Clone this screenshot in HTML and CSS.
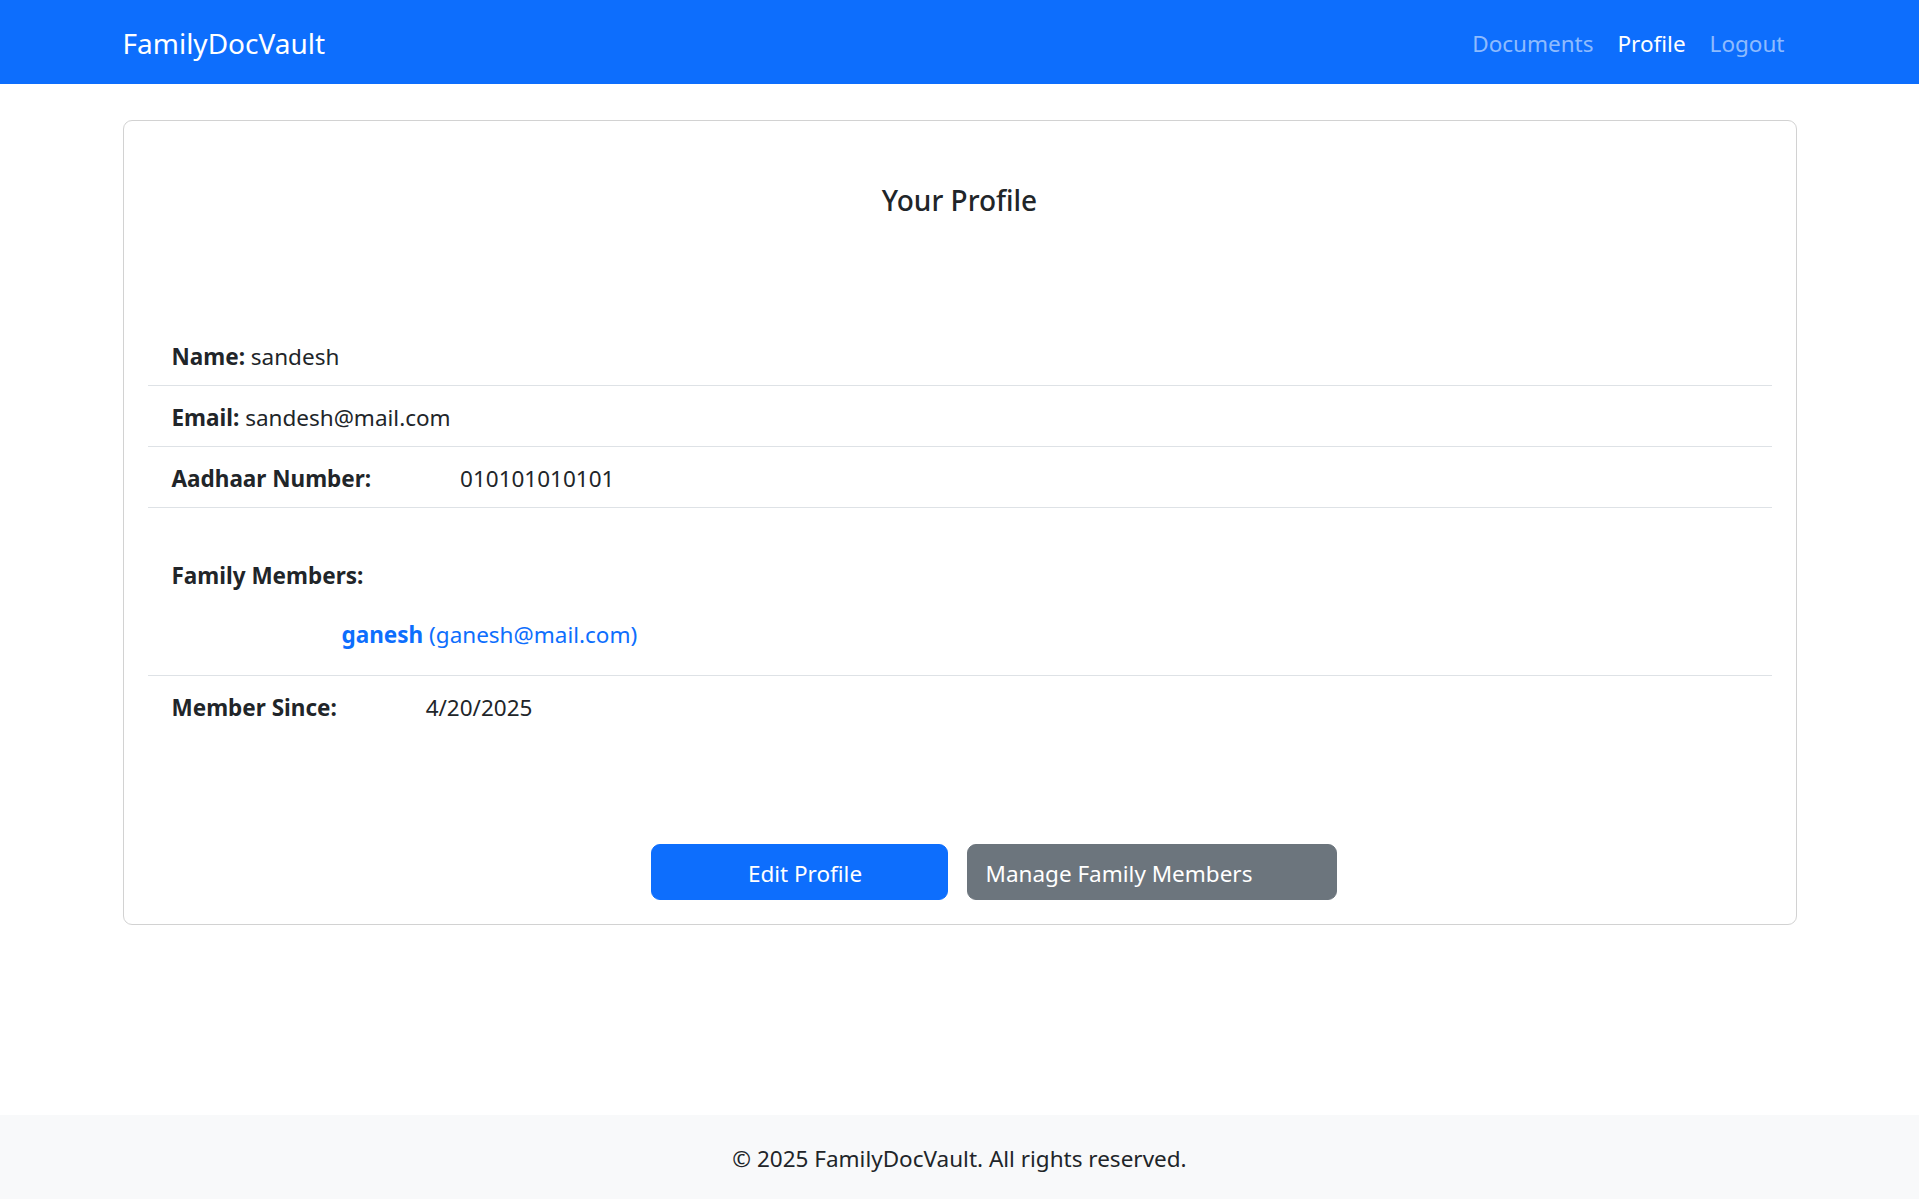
FILE: index.html
```html
<!DOCTYPE html>
<html lang="en">
<head>
<meta charset="utf-8">
<title>Profile - FamilyDocVault</title>
<link rel="stylesheet" href="styles.css">
</head>
<body>
<nav class="navbar">
  <div class="container nav-inner">
    <a class="brand" href="#">FamilyDocVault</a>
    <ul class="nav-links">
      <li><a class="nav-link" href="#">Documents</a></li>
      <li><a class="nav-link active" href="#">Profile</a></li>
      <li><a class="nav-link" href="#">Logout</a></li>
    </ul>
  </div>
</nav>

<main class="container">
  <div class="card">
    <div class="card-body">
      <h5 class="title">Your Profile</h5>
      <ul class="info-list">
        <li class="info-item"><strong>Name:</strong> sandesh</li>
        <li class="info-item"><strong>Email:</strong> sandesh@mail.com</li>
        <li class="info-item"><strong>Aadhaar Number:</strong> <span class="spaced">010101010101</span></li>
        <li class="info-item family">
          <strong class="family-label">Family Members:</strong>
          <ul class="family-list">
            <li><a class="member" href="#"><strong>ganesh</strong> (ganesh@mail.com)</a></li>
          </ul>
        </li>
        <li class="info-item"><strong>Member Since:</strong> <span class="spaced">4/20/2025</span></li>
      </ul>
      <div class="actions">
        <a class="btn btn-primary" href="#">Edit Profile</a>
        <a class="btn btn-secondary" href="#">Manage Family Members</a>
      </div>
    </div>
  </div>
</main>

<footer class="footer">
  © 2025 FamilyDocVault. All rights reserved.
</footer>
</body>
</html>
```

FILE: styles.css
```css
* {
  box-sizing: border-box;
}

html, body {
  margin: 0;
  padding: 0;
}

body {
  font-family: "Noto Sans", "Open Sans", sans-serif;
  font-size: 22.5px;
  line-height: 36px;
  color: #212529;
  background: #ffffff;
  min-height: 100vh;
  display: flex;
  flex-direction: column;
}

a {
  text-decoration: none;
}

.container {
  width: 1674px;
  margin: 0 auto;
}

/* Navbar */
.navbar {
  background: #0d6efd;
  padding: 12px 0;
  height: 84px;
}

.nav-inner {
  display: flex;
  align-items: center;
  justify-content: space-between;
}

.brand {
  color: #ffffff;
  font-size: 28px;
  line-height: 45px;
  padding: 9px 0 6px;
}

.nav-links {
  list-style: none;
  margin: 0;
  padding: 0;
  display: flex;
}

.nav-link {
  display: block;
  padding: 14px 12px 10px;
  color: rgba(255, 255, 255, 0.55);
}

.nav-link.active {
  color: #ffffff;
}

/* Card */
.card {
  margin-top: 36px;
  border: 1px solid #d2d2d2;
  border-radius: 9px;
  background: #fff;
}

.card-body {
  padding: 24px;
}

.title {
  margin: 37px 0 107px;
  font-size: 28px;
  line-height: 36px;
  font-weight: 500;
  text-align: center;
}

.info-list {
  list-style: none;
  margin: 0;
  padding: 0;
}

.info-item {
  padding: 14px 24px 10px;
  border-bottom: 1px solid #dee2e6;
}

.info-item:last-child {
  border-bottom: none;
}

.info-item strong {
  font-weight: 700;
}

.spaced {
  margin-left: 83px;
}

.family-label {
  display: block;
  margin-top: 36px;
}

.family-list {
  list-style: none;
  margin: 23px 0 12px;
  padding: 0 0 0 170px;
}

.member {
  color: #0d6efd;
}

/* Buttons */
.actions {
  margin-top: 108px;
  display: flex;
  gap: 19px;
  padding-left: 503px;
}

.btn {
  display: block;
  height: 56px;
  padding: 11px 18px 7px;
  border: 1px solid transparent;
  border-radius: 9px;
  color: #ffffff;
  line-height: 36px;
}

.btn-primary {
  width: 297px;
  background: #0d6efd;
  border-color: #0d6efd;
  text-align: center;
  padding-left: 30px;
}

.btn-secondary {
  width: 370px;
  background: #6c757d;
  border-color: #6c757d;
  text-align: left;
  padding-left: 18px;
}

/* Footer */
.footer {
  margin-top: auto;
  background: #f8f9fa;
  padding: 26px 0 22px;
  height: 84px;
  text-align: center;
  color: #212529;
}
```
